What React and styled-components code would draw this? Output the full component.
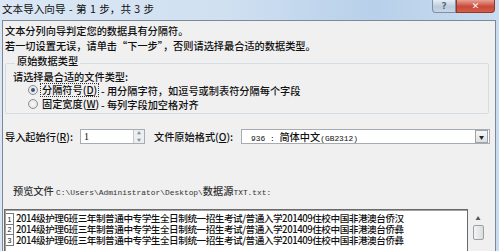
import React from "react"
import styled, { createGlobalStyle } from "styled-components"

const GlobalStyle = createGlobalStyle`
  html, body { margin: 0; padding: 0; background: #f0f0f0; }
  body { font-family: "Noto Sans CJK SC", "Noto Sans", sans-serif; color: #111; }
`

const Window = styled.div`
  width: 499px;
  height: 251px;
  overflow: hidden;
  display: flex;
  flex-direction: column;
  background: linear-gradient(90deg, #dbe7f4 0%, #d0e0f1 45%, #b8d0ea 75%, #c9dcf0 100%);
`

const TitleBar = styled.div`
  height: 20px;
  flex: none;
  display: flex;
  align-items: flex-start;
  justify-content: space-between;
`

const Title = styled.div`
  font-size: 10.6px;
  line-height: 18px;
  padding-left: 2px;
  color: #111;
  word-spacing: 1px;
`

const Caption = styled.div`
  display: flex;
  margin-right: 4px;
`

const CapButton = styled.div`
  width: ${p => p.$w}px;
  height: 12px;
  display: flex;
  align-items: center;
  justify-content: center;
  font-family: "DejaVu Sans", sans-serif;
  font-size: 9px;
  font-weight: bold;
  color: ${p => (p.$close ? "#fff" : "#5d6d80")};
  border: 1px solid ${p => (p.$close ? "#8b3a2d" : "#7f8fa3")};
  border-top: none;
  background: ${p =>
    p.$close
      ? "linear-gradient(#e8a293, #c9483a 55%, #d35f45)"
      : "linear-gradient(#e6eef7, #bccbdc 55%, #c8d6e5)"};
  border-radius: ${p => (p.$close ? "0 0 4px 0" : "0 0 0 4px")};
`

const Client = styled.div`
  flex: 1;
  margin: 0 3px 0 2px;
  background: #f0f0f0;
  border: 1px solid #7d8898;
  border-bottom: none;
  font-size: 10.2px;
  font-weight: 500;
  display: flex;
  flex-direction: column;
`

const Intro = styled.div`
  padding: 2px 0 0 2px;
  line-height: 15px;
`

const Group = styled.fieldset`
  margin: 2px 0 0 2px;
  width: 484px;
  box-sizing: border-box;
  padding: 0 7px 2px 7px;
  border: 1px solid #d3dde3;
  border-radius: 2px;
`

const Legend = styled.legend`
  padding: 0 2px 4px 2px;
  margin-left: 2px;
  line-height: 12px;
`

const Hint = styled.div`
  line-height: 12px;
`

const RadioRow = styled.div`
  display: flex;
  align-items: center;
  height: 14px;
  padding-left: 15px;
`

const Radio = styled.span`
  width: 8px;
  height: 8px;
  border-radius: 50%;
  border: 1px solid #8a8f96;
  background: radial-gradient(circle, #fafafa 0%, #dcdcdc 100%);
  display: flex;
  align-items: center;
  justify-content: center;
  margin-right: 2px;
  flex: none;

  &::after {
    content: "";
    width: 4px;
    height: 4px;
    border-radius: 50%;
    background: ${p => (p.$on ? "#39557a" : "transparent")};
  }
`

const RadioLabel = styled.span`
  width: 56px;
  line-height: 12px;
  padding-left: 1px;
  border: 1px dotted ${p => (p.$focus ? "#333" : "transparent")};
  flex: none;
  white-space: nowrap;
`

const RadioDesc = styled.span`
  margin-left: 2px;
`

const FieldRow = styled.div`
  display: flex;
  align-items: center;
  height: 15px;
  margin: 15px 0 0 2px;
`

const FieldLabel = styled.span`
  width: ${p => p.$w}px;
  flex: none;
  white-space: nowrap;
`

const Spinner = styled.div`
  width: 65px;
  height: 15px;
  box-sizing: border-box;
  border: 1px solid #a7abb2;
  background: #fff;
  display: flex;
  margin-right: 9px;
`

const SpinValue = styled.span`
  flex: 1;
  padding-left: 3px;
  line-height: 13px;
  font-family: "Liberation Serif", serif;
  font-size: 10px;
`

const SpinButtons = styled.div`
  width: 10px;
  display: flex;
  flex-direction: column;
  border-left: 1px solid #c5c9cf;
  background: #eceef1;
`

const SpinHalf = styled.div`
  flex: 1;
  display: flex;
  align-items: center;
  justify-content: center;
  font-size: 4px;
  color: #8a9098;
  line-height: 1;
`

const Select = styled.div`
  width: 249px;
  height: 15px;
  box-sizing: border-box;
  border: 1px solid #a7abb2;
  background: #fff;
  display: flex;
  align-items: center;
  padding-left: 9px;
`

const SelectText = styled.span`
  flex: 1;
`

const Mono = styled.span`
  font-family: "Liberation Mono", monospace;
  font-size: 7.9px;
  font-weight: normal;
`

const DropButton = styled.span`
  width: 11px;
  height: 11px;
  margin-right: 1px;
  border: 1px solid #9da3ab;
  background: linear-gradient(#f6f7f8, #dde0e4);
  display: flex;
  align-items: center;
  justify-content: center;
  font-size: 5px;
  color: #222;
`

const PreviewLabel = styled.div`
  margin: 40px 0 0 10px;
  line-height: 14px;
  color: #333;
`

const PreviewArea = styled.div`
  display: flex;
  margin-top: 9px;
  flex: 1;
`

const PreviewBox = styled.div`
  width: 464px;
  margin-left: 1px;
  box-sizing: border-box;
  border: 1px solid #6a6a6a;
  border-bottom: none;
  box-shadow: inset 1px 1px 0 #a0a0a0;
  background: #fff;
  padding-top: 3px;
`

const PreviewRow = styled.div`
  display: flex;
  height: 11px;
  line-height: 11px;
  align-items: center;
  font-size: 9.6px;
  letter-spacing: -0.45px;
  color: #111;
  white-space: nowrap;
`

const RowNum = styled.span`
  width: 7px;
  height: 10px;
  margin: 0 2px 0 1px;
  border: 1px solid #7a7a7a;
  border-left: none;
  border-top: ${p => (p.$first ? "1px solid #7a7a7a" : "none")};
  font-size: 7px;
  line-height: 11px;
  letter-spacing: 0;
  text-align: center;
  flex: none;
  font-family: "Liberation Sans", sans-serif;
`

const ScrollBar = styled.div`
  width: 14px;
  margin-left: 3px;
  display: flex;
  flex-direction: column;
  align-items: center;
`

const ScrollArrow = styled.span`
  font-size: 5px;
  line-height: 6px;
  color: #555;
  margin-top: 6px;
`

const ScrollThumb = styled.div`
  width: 9px;
  height: 13px;
  margin-top: 4px;
  border: 1px solid #9aa0a8;
  border-radius: 2px;
  background: linear-gradient(90deg, #f4f4f4, #dcdcdc);
`

const rows = [
  "2014级护理6班三年制普通中专学生全日制统一招生考试/普通入学201409住校中国非港澳台侨汉",
  "2014级护理6班三年制普通中专学生全日制统一招生考试/普通入学201409住校中国非港澳台侨彝",
  "2014级护理6班三年制普通中专学生全日制统一招生考试/普通入学201409住校中国非港澳台侨彝",
]

export default function App() {
  return (
    <>
      <GlobalStyle />
      <Window>
        <TitleBar>
          <Title>文本导入向导 - 第 1 步，共 3 步</Title>
          <Caption>
            <CapButton $w={22}>?</CapButton>
            <CapButton $w={37} $close>✕</CapButton>
          </Caption>
        </TitleBar>
        <Client>
          <Intro>
            <div>文本分列向导判定您的数据具有分隔符。</div>
            <div>若一切设置无误，请单击“下一步”，否则请选择最合适的数据类型。</div>
          </Intro>
          <Group>
            <Legend>原始数据类型</Legend>
            <Hint>请选择最合适的文件类型:</Hint>
            <RadioRow>
              <Radio $on />
              <RadioLabel $focus>分隔符号(<u>D</u>)</RadioLabel>
              <RadioDesc>- 用分隔字符，如逗号或制表符分隔每个字段</RadioDesc>
            </RadioRow>
            <RadioRow>
              <Radio />
              <RadioLabel>固定宽度(<u>W</u>)</RadioLabel>
              <RadioDesc>- 每列字段加空格对齐</RadioDesc>
            </RadioRow>
          </Group>
          <FieldRow>
            <FieldLabel $w={75}>导入起始行(<u>R</u>):</FieldLabel>
            <Spinner>
              <SpinValue>1</SpinValue>
              <SpinButtons>
                <SpinHalf>▲</SpinHalf>
                <SpinHalf>▼</SpinHalf>
              </SpinButtons>
            </Spinner>
            <FieldLabel $w={87}>文件原始格式(<u>O</u>):</FieldLabel>
            <Select>
              <SelectText>
                <Mono>936 : </Mono>简体中文<Mono>(GB2312)</Mono>
              </SelectText>
              <DropButton>▼</DropButton>
            </Select>
          </FieldRow>
          <PreviewLabel>
            预览文件 <Mono>C:\Users\Administrator\Desktop\</Mono>数据源<Mono>TXT.txt:</Mono>
          </PreviewLabel>
          <PreviewArea>
            <PreviewBox>
              {rows.map((r, i) => (
                <PreviewRow key={i}>
                  <RowNum $first={i === 0}>{i + 1}</RowNum>
                  {r}
                </PreviewRow>
              ))}
            </PreviewBox>
            <ScrollBar>
              <ScrollArrow>▲</ScrollArrow>
              <ScrollThumb />
            </ScrollBar>
          </PreviewArea>
        </Client>
      </Window>
    </>
  )
}
